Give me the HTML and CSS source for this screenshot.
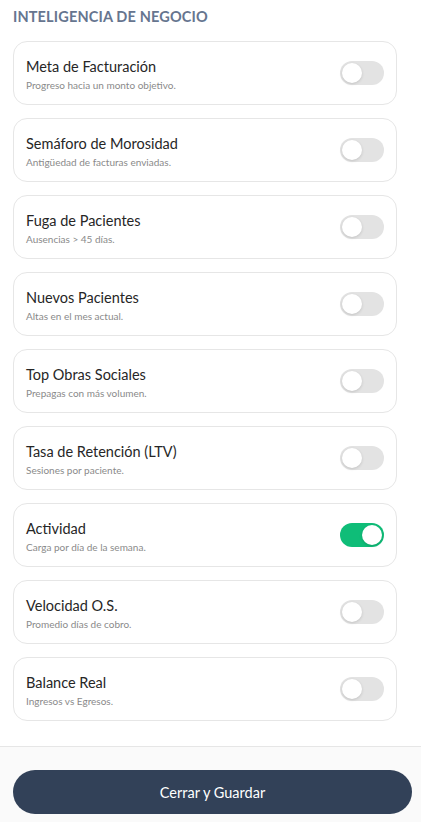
FILE: index.html
```html
<!DOCTYPE html>
<html lang="es">
<head>
<meta charset="utf-8">
<link rel="stylesheet" href="styles.css">
</head>
<body>
<div class="panel">
  <div class="content">
    <h2 class="section-title">INTELIGENCIA DE NEGOCIO</h2>
    <div class="list">
      <div class="card"><div class="txt"><div class="name">Meta de Facturación</div><div class="desc">Progreso hacia un monto objetivo.</div></div><span class="toggle"><span class="knob"></span></span></div>
      <div class="card"><div class="txt"><div class="name">Semáforo de Morosidad</div><div class="desc">Antigüedad de facturas enviadas.</div></div><span class="toggle"><span class="knob"></span></span></div>
      <div class="card"><div class="txt"><div class="name">Fuga de Pacientes</div><div class="desc">Ausencias &gt; 45 días.</div></div><span class="toggle"><span class="knob"></span></span></div>
      <div class="card"><div class="txt"><div class="name">Nuevos Pacientes</div><div class="desc">Altas en el mes actual.</div></div><span class="toggle"><span class="knob"></span></span></div>
      <div class="card"><div class="txt"><div class="name">Top Obras Sociales</div><div class="desc">Prepagas con más volumen.</div></div><span class="toggle"><span class="knob"></span></span></div>
      <div class="card"><div class="txt"><div class="name">Tasa de Retención (LTV)</div><div class="desc">Sesiones por paciente.</div></div><span class="toggle"><span class="knob"></span></span></div>
      <div class="card"><div class="txt"><div class="name">Actividad</div><div class="desc">Carga por día de la semana.</div></div><span class="toggle on"><span class="knob"></span></span></div>
      <div class="card"><div class="txt"><div class="name">Velocidad O.S.</div><div class="desc">Promedio días de cobro.</div></div><span class="toggle"><span class="knob"></span></span></div>
      <div class="card"><div class="txt"><div class="name">Balance Real</div><div class="desc">Ingresos vs Egresos.</div></div><span class="toggle"><span class="knob"></span></span></div>
    </div>
  </div>
  <div class="footer">
    <button class="save">Cerrar y Guardar</button>
  </div>
</div>
</body>
</html>
```
FILE: styles.css
```css
* { box-sizing: border-box; }
html, body { margin: 0; padding: 0; background: #ffffff; }
body { font-family: "Lato", "Noto Sans", sans-serif; color: #1f1f1f; }
.panel { width: 421px; height: 822px; display: flex; flex-direction: column; }
.content { flex: 1; padding: 8px 24px 0 13px; }
.section-title {
  margin: 0 0 15px 0;
  font-size: 14.5px;
  line-height: 18px;
  font-weight: 700;
  color: #66758f;
  letter-spacing: 0.15px;
}
.list { display: flex; flex-direction: column; gap: 13px; }
.card {
  height: 64px;
  border: 1px solid #e6e6e6;
  border-radius: 14px;
  background: #fff;
  display: flex;
  align-items: center;
  justify-content: space-between;
  padding: 0 12px 0 12px;
}
.txt { display: flex; flex-direction: column; gap: 3px; padding-top: 2px; }
.name { font-size: 14.5px; line-height: 18px; color: #262626; }
.desc { font-size: 10px; line-height: 12px; color: #8a8a8a; }
.toggle {
  position: relative;
  width: 44px;
  height: 24px;
  border-radius: 12px;
  background: #e3e3e3;
  flex: none;
}
.toggle .knob {
  position: absolute;
  top: 2px;
  left: 2px;
  width: 20px;
  height: 20px;
  border-radius: 50%;
  background: #fff;
  box-shadow: 0 1px 3px rgba(0,0,0,0.15);
}
.toggle.on { background: #0fbd78; }
.toggle.on .knob { left: 22px; }
.footer {
  height: 76px;
  border-top: 1px solid #e6e6e6;
  background: #fafafa;
  padding: 23px 9px 0 13px;
}
.save {
  width: 100%;
  height: 44px;
  border: none;
  border-radius: 22px;
  background: #324158;
  color: #fff;
  font-family: "Lato", "Noto Sans", sans-serif;
  font-size: 14.5px;
  font-weight: 400;
}
```
